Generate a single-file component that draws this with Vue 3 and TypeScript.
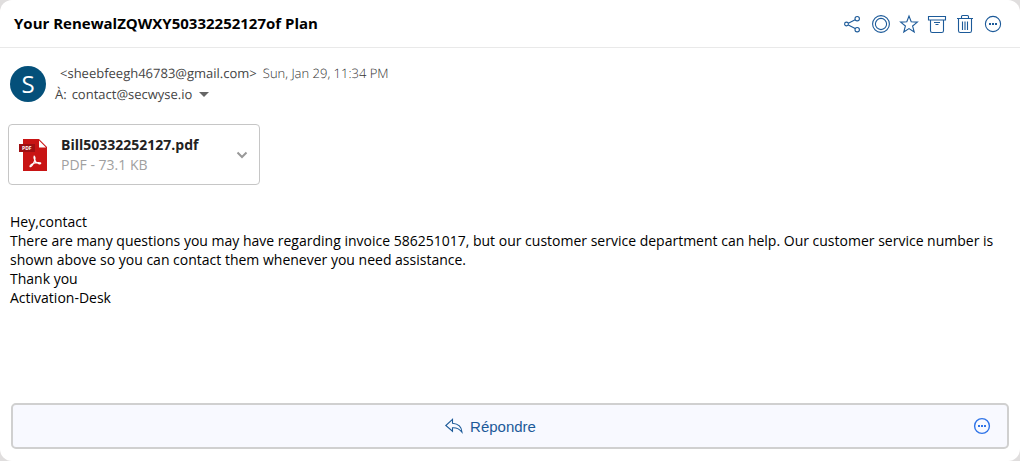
<script setup lang="ts">
interface Attachment {
  name: string
  details: string
}

const subject = 'Your RenewalZQWXY50332252127of Plan'
const sender = '<sheebfeegh46783@gmail.com>'
const sentAt = 'Sun, Jan 29, 11:34 PM'
const recipient = 'contact@secwyse.io'
const attachment: Attachment = { name: 'Bill50332252127.pdf', details: 'PDF - 73.1 KB' }
const lines: string[] = [
  'Hey,contact',
  'There are many questions you may have regarding invoice 586251017, but our customer service department can help. Our customer service number is shown above so you can contact them whenever you need assistance.',
  'Thank you',
  'Activation-Desk',
]
</script>

<template>
  <main class="mail">
    <header class="topbar">
      <h1 class="subject">{{ subject }}</h1>
      <div class="actions">
        <button type="button" class="icon-btn" aria-label="Share">
          <svg viewBox="0 0 20 20">
            <circle cx="3.500" cy="10" r="1.900" /><circle cx="14.200" cy="4.700" r="2.200" /><circle cx="14.200" cy="15.700" r="2.200" />
            <path d="M5.300 9.200l6.900-3.500M5.300 10.900l6.900 3.700" />
          </svg>
        </button>
        <button type="button" class="icon-btn" aria-label="Mark as unread">
          <svg viewBox="0 0 20 20"><circle cx="10" cy="10" r="8.4" /><circle cx="10" cy="10" r="5.6" /></svg>
        </button>
        <button type="button" class="icon-btn" aria-label="Star">
          <svg viewBox="0 0 20 20">
            <path d="M10 2l2.2 5.8 6.2.3-4.8 3.9 1.6 6L10 14.6 4.8 18l1.6-6-4.8-3.900 6.200-.3z" />
          </svg>
        </button>
        <button type="button" class="icon-btn" aria-label="Archive">
          <svg viewBox="0 0 20 20">
            <path d="M1.500 2.500h17v3.500h-17zM3.500 6v10.700q0 1.800 1.800 1.800h9.400q1.800 0 1.800-1.800V6M7 8.500h6M8.500 10.500h3" />
          </svg>
        </button>
        <button type="button" class="icon-btn" aria-label="Delete">
          <svg viewBox="0 0 20 20">
            <path d="M2 4.500h16M6.500 4.500V2.600q0-1.100 1.100-1.100h4.800q1.100 0 1.100 1.100v1.900M3.500 4.500v12.200q0 1.800 1.800 1.800h9.400q1.800 0 1.800-1.800V4.500M7.500 7.500v8.500M10 7.500v8.500M12.500 7.500v8.500" />
          </svg>
        </button>
        <button type="button" class="icon-btn" aria-label="More actions">
          <svg viewBox="0 0 20 20">
            <circle cx="10" cy="10" r="7.6" />
            <path class="solid" d="M6 9h2v2H6zM9 9h2v2H9zM12 9h2v2h-2z" />
          </svg>
        </button>
      </div>
    </header>

    <section class="meta">
      <div class="avatar">S</div>
      <div class="people">
        <div class="from">
          <span class="sender">{{ sender }}</span>
          <time class="date">{{ sentAt }}</time>
        </div>
        <div class="to">
          <span>À:</span>
          <span>{{ recipient }}</span>
          <button type="button" class="caret" aria-label="Show details"></button>
        </div>
      </div>
    </section>

    <section class="attachment">
      <svg class="pdf" viewBox="0 0 28 32">
        <path fill="#c81414" d="M4 0h16l8 8v24H4z" />
        <path fill="#fff" d="M20 1.500V8.500h7z" />
        <path fill="#9d0f12" d="M0 5h16v8H0z" />
        <text x="3" y="11">PDF</text>
        <path class="ribbon" d="M15.200 17.200c-.9 1.900.6 4 1.700 5.700 1.500 1.600 4.300 2.400 4.800 1.600.4-1.100-3.200-1.200-5.600-.6-2.700.6-5.600 2.500-5.100 3.700.9.900 3.300-2.500 4.300-5.100.8-2.100 1-4.400-.1-5.300z" />
      </svg>
      <div class="file">
        <strong class="file-name">{{ attachment.name }}</strong>
        <span class="file-details">{{ attachment.details }}</span>
      </div>
      <button type="button" class="expand" aria-label="Attachment options">
        <svg viewBox="0 0 12 8"><path d="M1.500 1.500L6 6l4.500-4.500" /></svg>
      </button>
    </section>

    <article class="body">
      <p v-for="line in lines" :key="line">{{ line }}</p>
    </article>

    <footer class="reply-bar">
      <button type="button" class="reply">
        <svg viewBox="0 0 20 18">
          <path d="M8.500 2.300L1.800 8.500l6.700 5.700v-3.500c4.200-.2 7.200 1.200 9.500 4.500-.3-5-3.700-8.500-9.500-9z" />
        </svg>
        <span>Répondre</span>
      </button>
      <button type="button" class="more" aria-label="More reply options">
        <svg viewBox="0 0 20 20">
          <circle cx="10" cy="10" r="7.400" />
          <path class="solid" d="M6 9h2v2H6zM9 9h2v2H9zM12 9h2v2h-2z" />
        </svg>
      </button>
    </footer>
  </main>
</template>

<style>
html {
  background: #e0dede;
}
</style>

<style scoped>
.mail {
  display: flex;
  flex-direction: column;
  box-sizing: border-box;
  min-height: 100vh;
  padding-bottom: 12px;
  border-radius: 12px;
  background: #fff;
  color: #000;
  font-family: "Open Sans", "Noto Sans", sans-serif;
  font-size: 14px;
}

button {
  padding: 0;
  border: 0;
  background: none;
  color: inherit;
  font: inherit;
  cursor: pointer;
}

svg {
  display: block;
}

.topbar {
  display: flex;
  align-items: center;
  justify-content: space-between;
  height: 47px;
  padding: 0 17px 0 14px;
  border-bottom: 1px solid #e9e9e9;
}

.subject {
  margin: 0;
  padding-bottom: 2px;
  font-size: 15px;
  font-weight: 700;
  line-height: 20px;
}

.actions {
  display: flex;
  gap: 8px;
}

.icon-btn svg,
.more svg {
  width: 20px;
  height: 20px;
}

.icon-btn svg,
.more svg,
.reply svg {
  fill: none;
  stroke: #1c5a99;
  stroke-width: 1.1;
}

.icon-btn .solid {
  fill: #1c5a99;
  stroke: none;
}

.meta {
  display: flex;
  align-items: center;
  gap: 9px;
  padding: 15px 10px 0;
}

.avatar {
  width: 36px;
  height: 36px;
  border-radius: 50%;
  background: #04507a;
  color: #fff;
  font-size: 24px;
  line-height: 36px;
  text-align: center;
}

.people {
  font-size: 13px;
  line-height: 21px;
  color: #444;
  text-rendering: geometricPrecision;
}

.from {
  display: flex;
  gap: 6px;
  padding-left: 5px;
}

.date {
  color: #333;
  font-weight: 300;
}

.to {
  display: flex;
  align-items: center;
  gap: 5px;
}

.caret {
  margin-left: 2px;
  border: 5px solid transparent;
  border-top-color: #666;
  border-bottom: 0;
}

.attachment {
  display: flex;
  align-items: center;
  box-sizing: border-box;
  width: 252px;
  height: 61px;
  margin: 19px 8px 0;
  padding: 0 11px 0 10px;
  border: 1px solid #c6c6c6;
  border-radius: 4px;
}

.pdf {
  width: 28px;
  height: 32px;
}

.pdf text {
  fill: #fff;
  font-size: 5px;
  font-weight: 700;
}

.ribbon {
  fill: none;
  stroke: #fff;
  stroke-width: 1.2;
}

.file {
  display: flex;
  flex: 1;
  flex-direction: column;
  margin-left: 14px;
  line-height: 20px;
}

.file-name {
  color: #222;
}

.file-details {
  color: #a0a0a0;
}

.expand svg {
  width: 12px;
  height: 8px;
  fill: none;
  stroke: #999;
  stroke-width: 2;
}

.body {
  padding: 27px 10px 24px;
  line-height: 19px;
}

.body p {
  margin: 0;
}

.reply-bar {
  display: flex;
  align-items: center;
  box-sizing: border-box;
  height: 46px;
  margin: auto 11px 0;
  border: 2px solid #d0d0d0;
  border-radius: 5px;
  background: #f8f9ff;
}

.reply {
  display: flex;
  flex: 1;
  align-items: center;
  justify-content: center;
  gap: 6px;
  padding-right: 5px;
  color: #1c5a99;
  font-family: "Liberation Sans", Arial, sans-serif;
  font-size: 15px;
}

.reply svg {
  width: 20px;
  height: 18px;
}

.more {
  margin-right: 15px;
}

.more svg {
  stroke: #2f74e8;
  stroke-width: 1.4;
}

.more .solid {
  fill: #2f74e8;
  stroke: none;
}
</style>
